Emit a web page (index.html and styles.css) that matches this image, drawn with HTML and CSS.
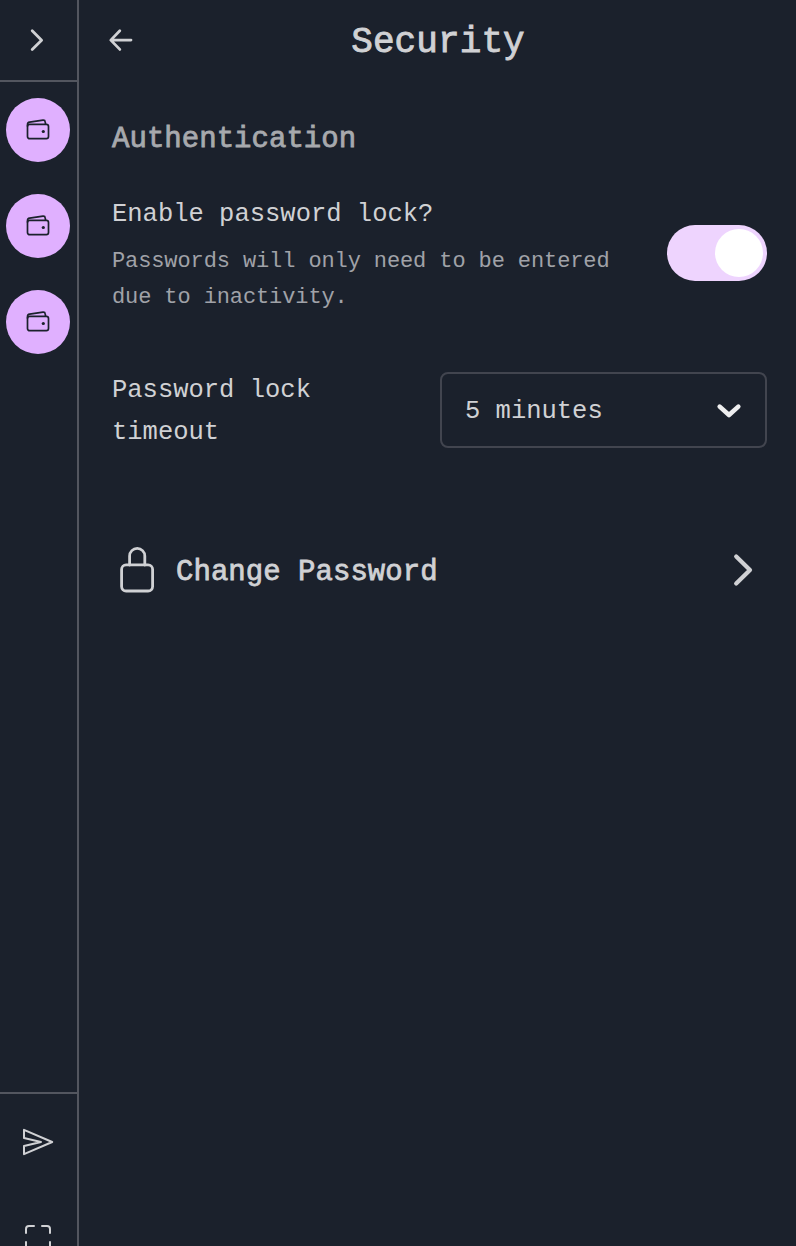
FILE: index.html
```html
<!DOCTYPE html>
<html lang="en">
<head>
<meta charset="utf-8">
<title>Security</title>
<link rel="stylesheet" href="styles.css">
</head>
<body>
<svg class="defs" width="0" height="0">
  <symbol id="wallet" viewBox="0 0 24 24">
    <rect x="1.5" y="6.4" width="21" height="14.3" rx="2.2"/>
    <path d="M1.5 8.6V6.6Q1.5 4.5 3.6 4.2L17 2.2Q19 2 19.2 3.9L19.6 6.4"/>
    <circle class="dot" cx="17.3" cy="13.5" r="1.6"/>
  </symbol>
</svg>
<div class="app">
  <aside class="sidebar">
    <button class="expand" aria-label="Expand">
      <svg class="icon" width="24" height="28" viewBox="0 0 24 28"><path class="w3" d="M7.2 4.8L16.6 14.2L7.2 23.6"/></svg>
    </button>
    <nav class="accounts">
      <button class="account" aria-label="Account 1"><svg class="wallet" width="24" height="24"><use href="#wallet"/></svg></button>
      <button class="account" aria-label="Account 2"><svg class="wallet" width="24" height="24"><use href="#wallet"/></svg></button>
      <button class="account" aria-label="Account 3"><svg class="wallet" width="24" height="24"><use href="#wallet"/></svg></button>
    </nav>
    <div class="tools">
      <button class="tool" aria-label="Send">
        <svg class="icon" width="32" height="32" viewBox="0 0 32 32"><path d="M2 3.8L30.2 16L2 28.2V20L19 16L2 12Z"/></svg>
      </button>
      <button class="tool" aria-label="Full screen">
        <svg class="icon" width="32" height="32" viewBox="0 0 32 32"><path d="M4 11V7Q4 4 7 4H12M20 4H25Q28 4 28 7V11M4 20V25Q4 28 7 28H12M28 20V25Q28 28 25 28H20"/></svg>
      </button>
    </div>
  </aside>
  <main class="main">
    <header class="header">
      <button class="back" aria-label="Back">
        <svg class="icon" width="28" height="28" viewBox="0 0 28 28"><path class="w3" d="M13.8 4.8L4.8 14.1L13.8 23.4M5 14.1H25"/></svg>
      </button>
      <h1 class="title">Security</h1>
    </header>
    <section class="content">
      <h2 class="heading">Authentication</h2>
      <div class="row">
        <div class="copy">
          <p class="label">Enable password lock?</p>
          <p class="hint">Passwords will only need to be entered due to inactivity.</p>
        </div>
        <button class="switch" role="switch" aria-checked="true" aria-label="Password lock"><span class="knob"></span></button>
      </div>
      <div class="row timeout">
        <p class="label narrow">Password lock timeout</p>
        <button class="select"><span>5 minutes</span>
          <svg class="chevron" width="28" height="20" viewBox="0 0 28 20"><path d="M4.7 5.6L14 14L23.3 5.6"/></svg>
        </button>
      </div>
      <button class="action">
        <svg class="icon lock" width="48" height="48" viewBox="0 0 48 48"><rect x="9.6" y="18.8" width="31" height="26.2" rx="4.5"/><path d="M17.6 19V10A7.6 7.6 0 0 1 32.8 10V19"/></svg>
        <span class="action-label">Change Password</span>
        <svg class="icon" width="48" height="48" viewBox="0 0 48 48"><path class="w4" d="M17.2 10.4L31 24L17.2 37.6"/></svg>
      </button>
    </section>
  </main>
</div>
</body>
</html>
```
FILE: styles.css
```css
* { box-sizing: border-box; }
body {
  margin: 0;
  background: #1b212c;
  color: #d0d1d4;
  font-family: "Liberation Mono", monospace;
}
h1, h2, p { margin: 0; font-weight: 400; }
button {
  margin: 0;
  padding: 0;
  border: 0;
  background: none;
  color: inherit;
  font: inherit;
  display: flex;
  align-items: center;
  justify-content: center;
}
svg { display: block; fill: none; flex: none; }
.defs { display: none; }
.app { display: flex; height: 1246px; overflow: hidden; }
.sidebar {
  width: 79px;
  flex: none;
  display: flex;
  flex-direction: column;
  border-right: 2px solid #53565f;
}
.expand { height: 82px; flex: none; padding-right: 3px; border-bottom: 2px solid #53565f; }
.accounts { flex: 1; display: flex; flex-direction: column; gap: 32px; padding: 16px 0 0 6px; }
.account { width: 64px; height: 64px; border-radius: 50%; background: #e0b0ff; }
.wallet { stroke: #1b212c; stroke-width: 1.7; stroke-linejoin: round; }
.dot { fill: #1b212c; stroke: none; }
.tools {
  height: 154px;
  flex: none;
  display: flex;
  flex-direction: column;
  border-top: 2px solid #53565f;
}
.tool { height: 96px; flex: none; padding-right: 1px; }
.icon { stroke: #d0d1d4; stroke-width: 2; stroke-linecap: round; stroke-linejoin: round; }
.w3 { stroke-width: 2.8; }
.w4 { stroke-width: 4.2; }
.main { flex: 1; min-width: 0; }
.header { height: 80px; display: grid; grid-template-columns: 28px 1fr 28px; align-items: center; padding: 0 27px; }
.title { padding: 6px 0 0 1px; text-align: center; font-size: 36px; letter-spacing: 0.1px; line-height: 74px; -webkit-text-stroke: 0.9px; }
.content { padding: 39px 29px 0 33px; }
.heading { color: #a7a9ad; font-size: 29px; letter-spacing: 0.04px; line-height: 42px; -webkit-text-stroke: 0.8px; }
.row { display: flex; align-items: center; justify-content: space-between; }
.copy { width: 520px; padding-top: 33px; }
.label { font-size: 25.5px; line-height: 42px; }
.narrow { width: 240px; padding-top: 4px; }
.hint { margin-top: 8px; color: #a0a2a8; font-size: 22px; letter-spacing: -0.11px; line-height: 36px; }
.switch {
  width: 100px;
  height: 56px;
  margin-top: 28px;
  padding: 4px;
  border-radius: 28px;
  background: #eed4fe;
  justify-content: flex-end;
}
.knob { width: 48px; height: 48px; border-radius: 50%; background: #fff; }
.timeout { margin-top: 50px; }
.select {
  width: 327px;
  height: 76px;
  padding: 2px 22px 0 23px;
  border: 2px solid #42454f;
  border-radius: 8px;
  font-size: 25.5px;
  justify-content: space-between;
}
.chevron { stroke: #eeeeef; stroke-width: 4.6; stroke-linecap: round; stroke-linejoin: round; }
.action { width: 100%; height: 48px; margin-top: 92px; justify-content: flex-start; }
.lock { stroke-width: 2.8; }
.action-label { flex: 1; padding: 5px 0 0 16px; text-align: left; font-size: 29px; letter-spacing: 0.04px; -webkit-text-stroke: 0.8px; }
```
